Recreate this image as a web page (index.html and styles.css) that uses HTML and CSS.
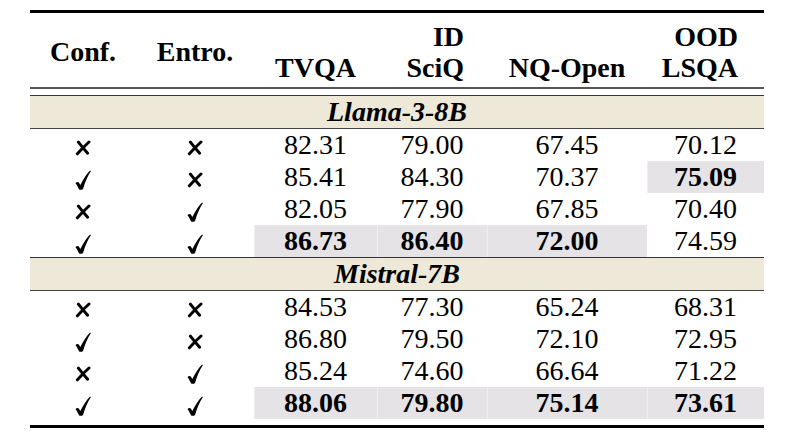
FILE: index.html
```html
<!DOCTYPE html>
<html lang="en">
<head>
    <meta charset="UTF-8">
    <title>Results table</title>
    <link rel="stylesheet" href="styles.css">
</head>
<body>

    <table class="results">
        <thead>
            <tr>
                <th class="c-conf">Conf.</th>
                <th class="c-entro">Entro.</th>
                <th class="c-tvqa">&nbsp;<br>TVQA</th>
                <th class="c-sciq">ID<br>SciQ</th>
                <th class="c-nq">&nbsp;<br>NQ-Open</th>
                <th class="c-lsqa">OOD<br>LSQA</th>
            </tr>
        </thead>
        <tbody>
            <tr class="gap"><td colspan="6"></td></tr>
            <tr><td class="band" colspan="6">Llama-3-8B</td></tr>
            <tr>
                <td><svg class="mark no" viewBox="0 0 16 16"><path d="M14 2 Q8.5 7 2.4 13.8 M3.4 2.2 Q7.6 7.6 12.6 13.2"/></svg></td>
                <td><svg class="mark no" viewBox="0 0 16 16"><path d="M14 2 Q8.5 7 2.4 13.8 M3.4 2.2 Q7.6 7.6 12.6 13.2"/></svg></td>
                <td>82.31</td><td>79.00</td><td>67.45</td><td>70.12</td>
            </tr>
            <tr>
                <td><svg class="mark" viewBox="0 0 16 20"><path d="M0.5 13.2 C1.5 11.8 3 11.6 3.8 12.6 L5.4 15 C8 9.5 11.2 4.6 14.8 0.8 C15.4 0.4 16 0.9 15.7 1.5 C12.6 6 10.2 11.8 8.2 18.4 C7.9 19.4 7 19.8 6 19.8 L5.2 19.8 C4.4 19.8 4 19.3 3.6 18.4 C2.6 16.2 1.6 14.4 0.5 13.2 Z"/></svg></td>
                <td><svg class="mark no" viewBox="0 0 16 16"><path d="M14 2 Q8.5 7 2.4 13.8 M3.4 2.2 Q7.6 7.6 12.6 13.2"/></svg></td>
                <td>85.41</td><td>84.30</td><td>70.37</td><td class="best">75.09</td>
            </tr>
            <tr>
                <td><svg class="mark no" viewBox="0 0 16 16"><path d="M14 2 Q8.5 7 2.4 13.8 M3.4 2.2 Q7.6 7.6 12.6 13.2"/></svg></td>
                <td><svg class="mark" viewBox="0 0 16 20"><path d="M0.5 13.2 C1.5 11.8 3 11.6 3.8 12.6 L5.4 15 C8 9.5 11.2 4.6 14.8 0.8 C15.4 0.4 16 0.9 15.7 1.5 C12.6 6 10.2 11.8 8.2 18.4 C7.9 19.4 7 19.8 6 19.8 L5.2 19.8 C4.4 19.8 4 19.3 3.6 18.4 C2.6 16.2 1.6 14.4 0.5 13.2 Z"/></svg></td>
                <td>82.05</td><td>77.90</td><td>67.85</td><td>70.40</td>
            </tr>
            <tr>
                <td><svg class="mark" viewBox="0 0 16 20"><path d="M0.5 13.2 C1.5 11.8 3 11.6 3.8 12.6 L5.4 15 C8 9.5 11.2 4.6 14.8 0.8 C15.4 0.4 16 0.9 15.7 1.5 C12.6 6 10.2 11.8 8.2 18.4 C7.9 19.4 7 19.8 6 19.8 L5.2 19.8 C4.4 19.8 4 19.3 3.6 18.4 C2.6 16.2 1.6 14.4 0.5 13.2 Z"/></svg></td>
                <td><svg class="mark" viewBox="0 0 16 20"><path d="M0.5 13.2 C1.5 11.8 3 11.6 3.8 12.6 L5.4 15 C8 9.5 11.2 4.6 14.8 0.8 C15.4 0.4 16 0.9 15.7 1.5 C12.6 6 10.2 11.8 8.2 18.4 C7.9 19.4 7 19.8 6 19.8 L5.2 19.8 C4.4 19.8 4 19.3 3.6 18.4 C2.6 16.2 1.6 14.4 0.5 13.2 Z"/></svg></td>
                <td class="best">86.73</td><td class="best">86.40</td><td class="best">72.00</td><td>74.59</td>
            </tr>

            <tr><td class="band" colspan="6">Mistral-7B</td></tr>
            <tr>
                <td><svg class="mark no" viewBox="0 0 16 16"><path d="M14 2 Q8.5 7 2.4 13.8 M3.4 2.2 Q7.6 7.6 12.6 13.2"/></svg></td>
                <td><svg class="mark no" viewBox="0 0 16 16"><path d="M14 2 Q8.5 7 2.4 13.8 M3.4 2.2 Q7.6 7.6 12.6 13.2"/></svg></td>
                <td>84.53</td><td>77.30</td><td>65.24</td><td>68.31</td>
            </tr>
            <tr>
                <td><svg class="mark" viewBox="0 0 16 20"><path d="M0.5 13.2 C1.5 11.8 3 11.6 3.8 12.6 L5.4 15 C8 9.5 11.2 4.6 14.8 0.8 C15.4 0.4 16 0.9 15.7 1.5 C12.6 6 10.2 11.8 8.2 18.4 C7.9 19.4 7 19.8 6 19.8 L5.2 19.8 C4.4 19.8 4 19.3 3.6 18.4 C2.6 16.2 1.6 14.4 0.5 13.2 Z"/></svg></td>
                <td><svg class="mark no" viewBox="0 0 16 16"><path d="M14 2 Q8.5 7 2.4 13.8 M3.4 2.2 Q7.6 7.6 12.6 13.2"/></svg></td>
                <td>86.80</td><td>79.50</td><td>72.10</td><td>72.95</td>
            </tr>
            <tr>
                <td><svg class="mark no" viewBox="0 0 16 16"><path d="M14 2 Q8.5 7 2.4 13.8 M3.4 2.2 Q7.6 7.6 12.6 13.2"/></svg></td>
                <td><svg class="mark" viewBox="0 0 16 20"><path d="M0.5 13.2 C1.5 11.8 3 11.6 3.8 12.6 L5.4 15 C8 9.5 11.2 4.6 14.8 0.8 C15.4 0.4 16 0.9 15.7 1.5 C12.6 6 10.2 11.8 8.2 18.4 C7.9 19.4 7 19.8 6 19.8 L5.2 19.8 C4.4 19.8 4 19.3 3.6 18.4 C2.6 16.2 1.6 14.4 0.5 13.2 Z"/></svg></td>
                <td>85.24</td><td>74.60</td><td>66.64</td><td>71.22</td>
            </tr>
            <tr>
                <td><svg class="mark" viewBox="0 0 16 20"><path d="M0.5 13.2 C1.5 11.8 3 11.6 3.8 12.6 L5.4 15 C8 9.5 11.2 4.6 14.8 0.8 C15.4 0.4 16 0.9 15.7 1.5 C12.6 6 10.2 11.8 8.2 18.4 C7.9 19.4 7 19.8 6 19.8 L5.2 19.8 C4.4 19.8 4 19.3 3.6 18.4 C2.6 16.2 1.6 14.4 0.5 13.2 Z"/></svg></td>
                <td><svg class="mark" viewBox="0 0 16 20"><path d="M0.5 13.2 C1.5 11.8 3 11.6 3.8 12.6 L5.4 15 C8 9.5 11.2 4.6 14.8 0.8 C15.4 0.4 16 0.9 15.7 1.5 C12.6 6 10.2 11.8 8.2 18.4 C7.9 19.4 7 19.8 6 19.8 L5.2 19.8 C4.4 19.8 4 19.3 3.6 18.4 C2.6 16.2 1.6 14.4 0.5 13.2 Z"/></svg></td>
                <td class="best">88.06</td><td class="best">79.80</td><td class="best">75.14</td><td class="best">73.61</td>
            </tr>
        </tbody>
    </table>

</body>
</html>
```

FILE: styles.css
```css
body {
    margin: 0;
    background-color: #ffffff;
    color: #000000;
}

.results {
    width: 734px;
    margin: 10px 0 0 30px;
    border-spacing: 0;
    border-top: 3px solid #000000;
    border-bottom: 3px solid #000000;
    padding: 0 0 6px 0;
    font-size: 28px;
    table-layout: fixed;
}

.results,
.results th,
.results td {
    font-family: "Liberation Serif", "Times New Roman", serif !important;
}

.results th {
    height: 71px;
    padding: 3px 0 0 0;
    border-bottom: 2px solid #555555;
    font-weight: bold;
    line-height: 31px;
    text-align: center;
    vertical-align: middle;
}

.c-conf { width: 106px; }
.c-entro { width: 118px; }
.c-tvqa { width: 123px; }
.c-nq { width: 160px; }

.results th.c-sciq {
    width: 87px;
    padding-right: 23px;
    text-align: right;
}

.results th.c-lsqa {
    width: 91px;
    padding-right: 26px;
    text-align: right;
}

.results td {
    height: 32px;
    padding: 0;
    line-height: 32px;
    text-align: center;
    vertical-align: middle;
}

.results .gap td {
    height: 6px;
    line-height: 6px;
}

.results td.band {
    height: 32px;
    border-top: 1px solid #333333;
    border-bottom: 1px solid #444444;
    background-color: #eee8d8;
    font-weight: bold;
    font-style: italic;
}

.results td.best {
    background-color: #e5e3e6;
    font-weight: bold;
    box-shadow: inset 1px 0 0 #efeef0;
}

.mark {
    width: 16px;
    height: 20px;
    fill: #000000;
    vertical-align: middle;
}

.mark.no {
    height: 16px;
    fill: none;
    stroke: #000000;
    stroke-width: 3;
    stroke-linecap: round;
}
```
